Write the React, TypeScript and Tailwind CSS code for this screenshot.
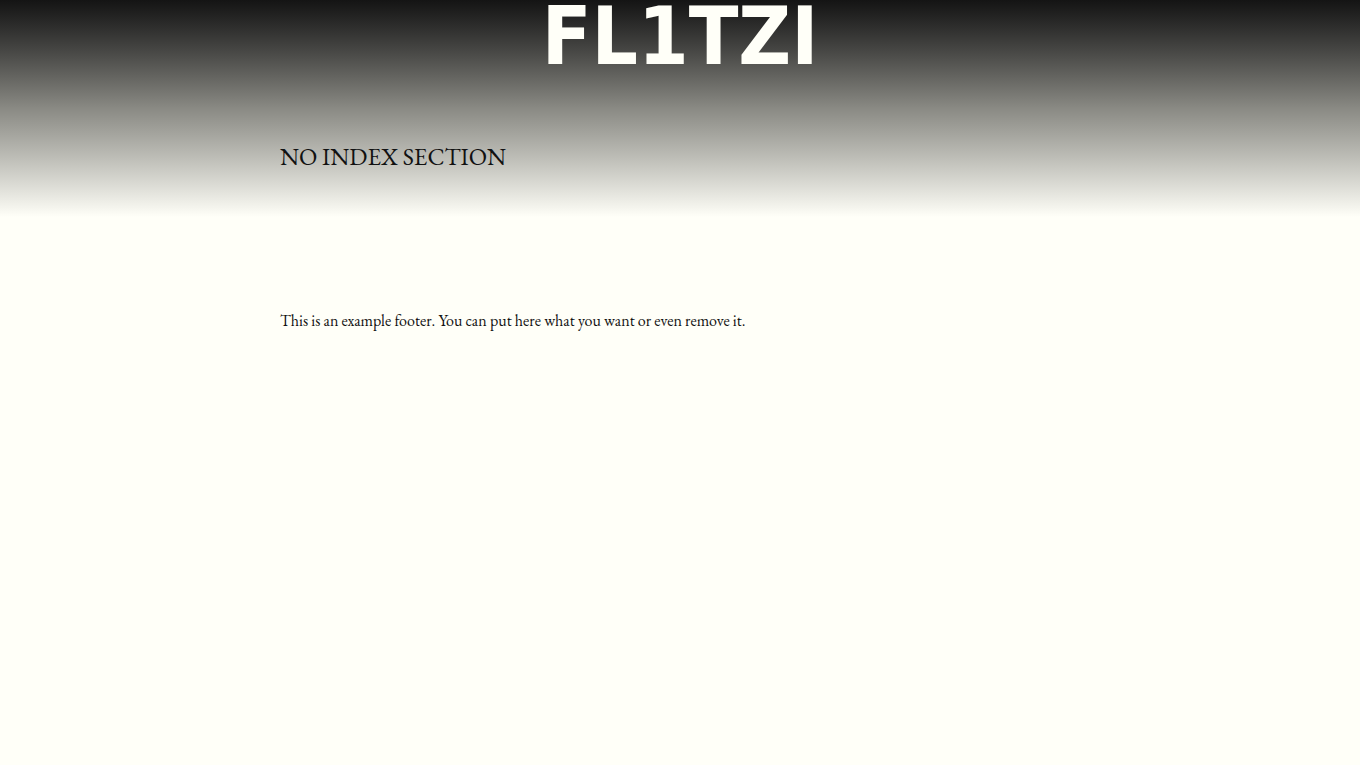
export default function App() {
  return (
    <div className="min-h-screen bg-[#fffff8] font-['EB_Garamond','Cardo','Liberation_Serif',serif] text-[#111111]">
      <div className="bg-linear-to-b from-[#141414] via-[#8a8a84] to-[#fffff8]">
        <header className="flex h-[72px] justify-center">
          <a
            href="/"
            className="font-['DejaVu_Sans_Condensed','DejaVu_Sans',sans-serif] text-[81px] leading-[72px] font-bold text-[#fffff8]"
          >
            FL1TZI
          </a>
        </header>
        <main className="mx-auto max-w-[800px] pt-[68px] pb-[43px]">
          <h1 className="text-[24px] leading-[34px]">NO INDEX SECTION</h1>
        </main>
      </div>
      <footer className="mx-auto max-w-[800px] pt-[92px] text-base leading-6">
        <p>This is an example footer. You can put here what you want or even remove it.</p>
      </footer>
    </div>
  );
}
